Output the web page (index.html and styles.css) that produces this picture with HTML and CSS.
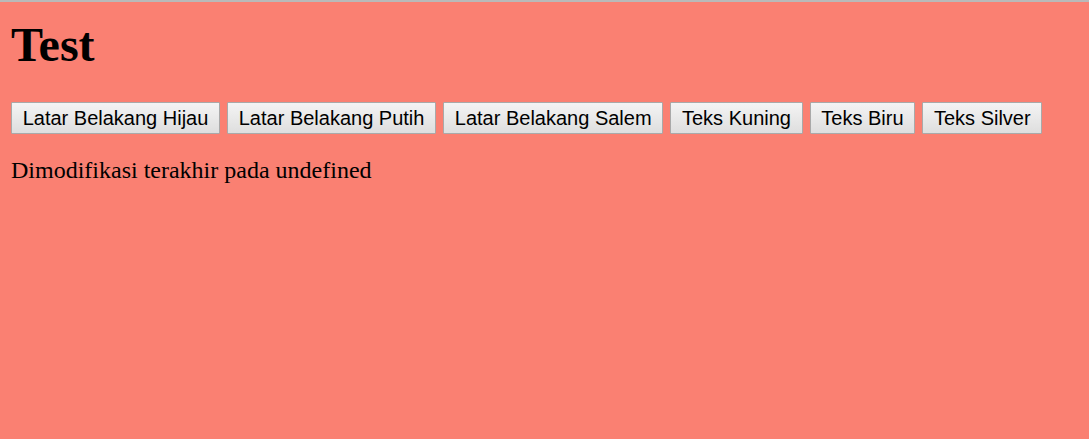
FILE: index.html
```html
<!DOCTYPE html>
<html lang="id">
<head>
<meta charset="utf-8">
<title>Test</title>
<link rel="stylesheet" href="styles.css">
</head>
<body class="page">
<h1 class="title">Test</h1>
<div class="buttons">
  <button class="btn">Latar Belakang Hijau</button>
  <button class="btn">Latar Belakang Putih</button>
  <button class="btn">Latar Belakang Salem</button>
  <button class="btn">Teks Kuning</button>
  <button class="btn">Teks Biru</button>
  <button class="btn">Teks Silver</button>
</div>
<p class="modified">Dimodifikasi terakhir pada undefined</p>
</body>
</html>
```
FILE: styles.css
```css
html {
  background: #fa8072;
  border-top: 2px solid #b9b9b9;
  height: 100%;
  box-sizing: border-box;
}
.page {
  margin: 0;
  padding: 0 11px;
  font-family: "Liberation Sans", Arial, sans-serif;
  color: #000;
}
.title {
  font-family: "Liberation Serif", "Times New Roman", serif;
  font-size: 48px;
  font-weight: bold;
  margin: 0;
  padding-top: 15px;
  line-height: normal;
}
.buttons {
  display: flex;
  gap: 7px;
  margin-top: 30px;
}
.btn {
  font-family: "Liberation Sans", Arial, sans-serif;
  font-size: 20px;
  height: 32px;
  padding: 0 10.7px;
  color: #000;
  background: linear-gradient(#f4f4f4, #dedede);
  border: 1px solid #a9a9a9;
  border-radius: 1px;
}
.modified {
  font-family: "Liberation Serif", "Times New Roman", serif;
  font-size: 24px;
  line-height: normal;
  margin: 23px 0 0;
}
```
